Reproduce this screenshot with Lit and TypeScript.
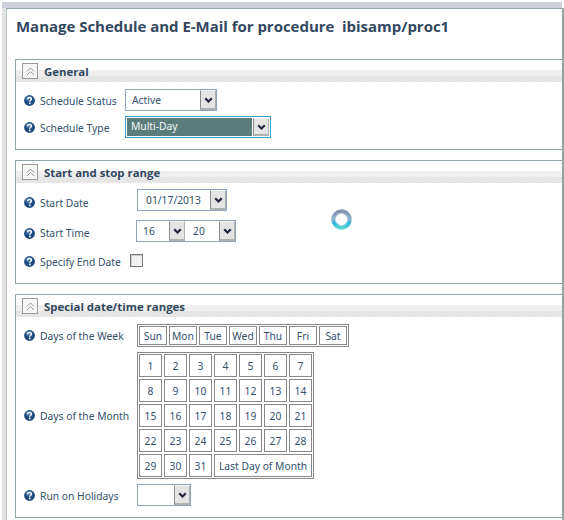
import { LitElement, html, css, svg } from "lit";
import { customElement } from "lit/decorators.js";

const help = html`<svg class="help" width="11" height="11" viewBox="0 0 11 11"><circle cx="5.5" cy="5.5" r="5.4" fill="#1d4a80"/><circle cx="4.5" cy="3.6" r="3" fill="#5b8fc4" opacity=".55"/><path d="M3.6 4.3c0-2.400 3.900-2.400 3.900-.3 0 1.300-1.700 1.300-1.700 2.700" fill="none" stroke="#fff" stroke-width="1.400"/><rect x="5" y="7.600" width="1.600" height="1.600" fill="#fff"/></svg>`;

const arrow = svg`<path d="M1.200 1.200L4.500 4.500L7.800 1.200" fill="none" stroke="#23283e" stroke-width="2.200"/>`;

function select(text: string, cls: string) {
  return html`<div class="sel ${cls}"><span class="val">${text}</span><span class="btn"><svg width="9" height="6" viewBox="0 0 9 6">${arrow}</svg></span></div>`;
}

function section(title: string, cls: string, body: unknown) {
  return html`<section class="box ${cls}">
    <div class="head">
      <span class="toggle"><svg width="11" height="11" viewBox="0 0 11 11" fill="none" stroke="#9a9a9a"><path d="M2 5.500L5.500 2L9 5.500M2 9L5.500 5.500L9 9"/></svg></span>
      <span class="title">${title}</span>
    </div>
    ${body}
  </section>`;
}

const week = ["Sun", "Mon", "Tue", "Wed", "Thu", "Fri", "Sat"];
const days = Array.from({ length: 31 }, (_, i) => i + 1);

@customElement("app-root")
export class AppRoot extends LitElement {
  static styles = css`
    :host { display: block; position: relative; width: 564px; height: 520px; overflow: hidden; background: #fff;
      font-family: "Noto Sans", Tahoma, sans-serif; font-size: 10.3px; color: #34506e; }
    .frame { box-sizing: border-box; width: 562px; height: 518px; margin: 2px 0 0 2px; padding-top: 6px;
      background:
        linear-gradient(#cdd0d8, #cdd0d8) 0 0 / 560px 6px no-repeat,
        linear-gradient(#e2e2e2, #e2e2e2) 0 0 / 4px 100% no-repeat; }
    .inner { box-sizing: border-box; width: 558px; height: 100%; margin-left: 4px; padding: 9px 0 0 8px;
      background: #fff; overflow: hidden;
      border-top: 1px solid #8fa5ab; border-left: 1px solid #b5c0c2; border-right: 2px solid #8fa5a5; }
    h1 { margin: 0 0 0 1px; height: 41px; font: bold 15px/16px "Open Sans", Tahoma, sans-serif; color: #33475f; letter-spacing: -.03px; white-space: nowrap; }
    .box { box-sizing: border-box; width: 560px; border: 1px solid #8fa5ab; background: #fff; margin-bottom: 10px; }
    .general { height: 91px; }
    .range { height: 124px; }
    .special { height: 224px; }
    .head { height: 22px; display: flex; align-items: center; padding-left: 6px;
      background:
        linear-gradient(to right, #fbfbdc 1px, transparent 1px) 0 20px / 15px 1px repeat-x,
        linear-gradient(#fff 0 10px, #efefef 10px 16px, #e5e5e5 16px 22px); }
    .toggle { box-sizing: border-box; width: 16px; height: 16px; border: 1px solid #9a9a9a; background: #f6f6f6;
      display: flex; align-items: center; justify-content: center; }
    .title { margin: 2px 0 0 6px; font: bold 11.4px/14px "Open Sans", Tahoma, sans-serif; color: #33475f; }
    .row { display: flex; align-items: center; padding-left: 8px; margin-top: 7px; white-space: nowrap; }
    .help { display: block; flex: none; margin-right: 5px; }
    .lab { flex: none; }
    .l85 { width: 85px; }
    .l96 { width: 96px; }
    .l97 { width: 97px; }
    .sel { box-sizing: border-box; height: 22px; border: 1px solid #8fa5bb; background: #fff; display: flex; align-items: stretch; }
    .val { flex: 1; padding-left: 6px; line-height: 21px; }
    .btn { box-sizing: border-box; flex: none; width: 16px; background: #e4e4e4;
      border: 1px solid #f4f4f4; border-left: 1px solid #8a8a8a; border-right: 1px solid #b0b0b0; border-bottom: 2px solid #b0b0b0;
      display: flex; align-items: center; justify-content: center; }
    .a { height: 22px; }
    .row.t5 { margin-top: 5px; }
    .row.t6 { margin-top: 6px; }
    .row.t8 { margin-top: 8px; }
    .row.t9 { margin-top: 9px; }
    .low5 .rail, .low5 .lab { margin-top: 5px; }
    .low4 .rail, .low4 .lab { margin-top: 4px; }
    .low2 .lab { margin-top: 2px; }
    .w92 { width: 92px; }
    .w54 { width: 54px; }
    .w146 { width: 146px; border-color: #35a0cf; padding: 1px; }
    .w146 .val { background: #5a7d7b; color: #f2f6f6; padding-left: 4px; line-height: 17px; }
    .w146 .btn { margin-left: 1px; }
    .wdate { width: 90px; }
    .wdate .val { padding-left: 8px; }
    .time { display: flex; gap: 2px; border: 1px solid #8fa5bb; height: 22px; box-sizing: border-box; width: 100px; }
    .time .sel { border: 0; height: 20px; width: 48px; }
    .cb { box-sizing: border-box; width: 13px; height: 13px; margin: 0 0 1px 9px; border: 1px solid #777; background: #f1f1f1; box-shadow: inset 1px 1px 0 #ccc; }
    .rail { flex: none; }
    .grid { display: grid; gap: 2px; padding: 1px; border: 1px solid #888; }
    .grid > div { box-sizing: border-box; border: 1px solid #888; text-align: center; color: #34506e; }
    .wk { grid-template-columns: repeat(7, 28px); grid-auto-rows: 19px; line-height: 18px; }
    .mo { grid-template-columns: repeat(7, 23px); grid-auto-rows: 23px; line-height: 22px; }
    .grid > .last { grid-column: span 4; }
    .spin { position: absolute; left: 331px; top: 209px; }
  `;

  render() {
    return html`<div class="frame"><div class="inner">
      <h1>Manage Schedule and E-Mail for procedure&nbsp; ibisamp/proc1</h1>
      ${section("General", "general", html`
        <div class="row a low2"><span class="rail">${help}</span><span class="lab l85">Schedule Status</span>${select("Active", "w92")}</div>
        <div class="row a t5 low2"><span class="rail">${help}</span><span class="lab l85">Schedule Type</span>${select("Multi-Day", "w146")}</div>
      `)}
      ${section("Start and stop range", "range", html`
        <div class="row a t6 low5"><span class="rail">${help}</span><span class="lab l97">Start Date</span>${select("01/17/2013", "wdate")}</div>
        <div class="row a t9 low4"><span class="rail">${help}</span><span class="lab l96">Start Time</span>
          <div class="time">${select("16", "")}${select("20", "")}</div></div>
        <div class="row a t8 low2"><span class="rail">${help}</span><span class="lab">Specify End Date</span><span class="cb"></span></div>
      `)}
      ${section("Special date/time ranges", "special", html`
        <div class="row"><span class="rail">${help}</span><span class="lab l97">Days of the Week</span>
          <div class="grid wk">${week.map((d) => html`<div>${d}</div>`)}</div></div>
        <div class="row t5"><span class="rail">${help}</span><span class="lab l97">Days of the Month</span>
          <div class="grid mo">${days.map((d) => html`<div>${d}</div>`)}<div class="last">Last Day of Month</div></div></div>
        <div class="row a t5 low2"><span class="rail">${help}</span><span class="lab l97">Run on Holidays</span>${select("", "w54")}</div>
      `)}
    </div></div>
    <svg class="spin" width="21" height="21" viewBox="0 0 21 21">
      <defs><linearGradient id="g" x1="0" y1="0" x2="0" y2="1"><stop offset="0" stop-color="#8494b2"/><stop offset=".5" stop-color="#8fb4cf"/><stop offset=".72" stop-color="#22b4dc"/><stop offset="1" stop-color="#58d4d0"/></linearGradient></defs>
      <circle cx="10.500" cy="10.500" r="8" fill="none" stroke="url(#g)" stroke-width="4.500"/>
      <circle cx="10.500" cy="10.500" r="6.200" fill="none" stroke="#d8e4f0" stroke-width="1" opacity=".7"/>
    </svg>`;
  }
}
